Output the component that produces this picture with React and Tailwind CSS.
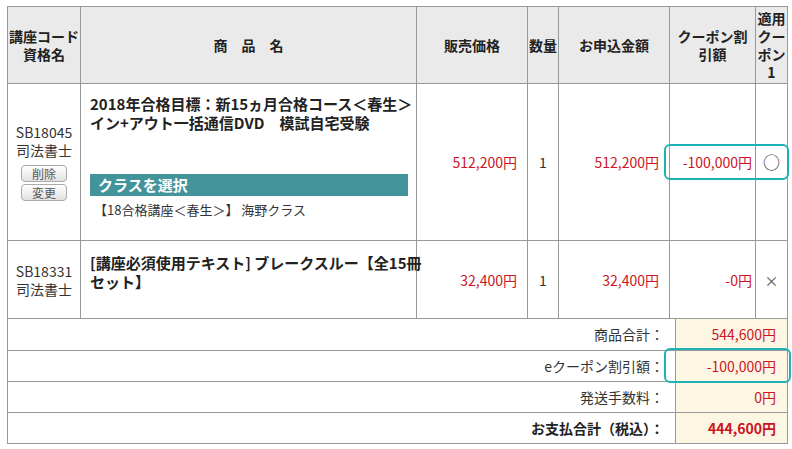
import React from "react";

const red = "text-[#cc1424]";

function Btn({ children }) {
  return (
    <div className="mx-auto w-[46px] h-[17px] rounded-[4px] border border-[#aaaaaa] bg-gradient-to-b from-white to-[#e2e2e2] text-[12px] leading-[15px] text-[#555]">
      {children}
    </div>
  );
}

export default function App() {
  const th = "border border-[#999] bg-[#eaeaea] font-bold text-[14px] leading-[18px] text-center align-middle text-[#222] p-0";
  const td = "border border-[#999] align-middle text-[14px] leading-[18px] p-0";
  return (
    <div className="relative w-[792px] h-[449px] bg-white text-[#333] font-['Noto_Sans_CJK_JP',sans-serif]">
      <div className="pt-[6px] pl-[7px]">
        <table className="table-fixed border-collapse w-[780px]">
          <colgroup>
            <col className="w-[73px]" />
            <col className="w-[336px]" />
            <col className="w-[111px]" />
            <col className="w-[31px]" />
            <col className="w-[111px]" />
            <col className="w-[86px]" />
            <col className="w-[32px]" />
          </colgroup>
          <thead>
            <tr className="h-[77px]">
              <th className={th}>講座コード<br />資格名</th>
              <th className={th}>商　品　名</th>
              <th className={th}>販売価格</th>
              <th className={th}>数量</th>
              <th className={th}>お申込金額</th>
              <th className={th}>クーポン割<br />引額</th>
              <th className={th}>適用<br />クー<br />ポン<br />1</th>
            </tr>
          </thead>
          <tbody>
            <tr className="h-[157px]">
              <td className={`${td} text-center`}>
                <div>SB18045</div>
                <div>司法書士</div>
                <div className="mt-[6px] flex flex-col gap-[2px]">
                  <Btn>削除</Btn>
                  <Btn>変更</Btn>
                </div>
              </td>
              <td className={`${td} !align-top pl-[9px] pr-[8px] pt-[10px]`}>
                <div className="text-[15px] font-bold leading-[19px] text-[#222] whitespace-nowrap">
                  2018年合格目標：新15ヵ月合格コース＜春生＞<br />
                  イン+アウト一括通信DVD　模試自宅受験
                </div>
                <div className="mt-[42px] h-[22px] bg-[#43939b] text-white font-bold text-[15px] leading-[22px] pl-[8px]">
                  クラスを選択
                </div>
                <div className="mt-[4px] text-[13px] leading-[20px] pl-[4px] text-[#333]">
                  【18合格講座＜春生＞】 海野クラス
                </div>
              </td>
              <td className={`${td} text-right pr-[10px] ${red}`}>512,200円</td>
              <td className={`${td} text-center`}>1</td>
              <td className={`${td} text-right pr-[10px] ${red}`}>512,200円</td>
              <td className={`${td} text-right pr-[3px] ${red}`}>-100,000円</td>
              <td className={`${td} text-center text-[17px]`}>○</td>
            </tr>
            <tr className="h-[78px]">
              <td className={`${td} text-center`}>
                <div>SB18331</div>
                <div>司法書士</div>
              </td>
              <td className={`${td} !align-top pl-[9px] pr-[8px] pt-[12px]`}>
                <div className="text-[15px] font-bold leading-[19px] text-[#222] whitespace-nowrap">
                  [講座必須使用テキスト] ブレークスルー【全15冊<br />
                  セット】
                </div>
              </td>
              <td className={`${td} text-right pr-[10px] ${red}`}>32,400円</td>
              <td className={`${td} text-center`}>1</td>
              <td className={`${td} text-right pr-[10px] ${red}`}>32,400円</td>
              <td className={`${td} text-right pr-[3px] ${red}`}>-0円</td>
              <td className={`${td} text-center text-[#555]`}>×</td>
            </tr>
          </tbody>
        </table>
        <table className="table-fixed border-collapse w-[780px]">
          <colgroup>
            <col className="w-[668px]" />
            <col className="w-[112px]" />
          </colgroup>
          <tbody>
            <tr className="h-[31px]">
              <td className={`${td} border-t-0 text-right pr-[11px]`}>商品合計：</td>
              <td className={`${td} border-t-0 text-right pr-[11px] bg-[#fcf6e3] ${red}`}>544,600円</td>
            </tr>
            <tr className="h-[31px]">
              <td className={`${td} text-right pr-[11px]`}>eクーポン割引額：</td>
              <td className={`${td} text-right pr-[11px] bg-[#fcf6e3] ${red}`}>-100,000円</td>
            </tr>
            <tr className="h-[31px]">
              <td className={`${td} text-right pr-[11px]`}>発送手数料：</td>
              <td className={`${td} text-right pr-[11px] bg-[#fcf6e3] ${red}`}>0円</td>
            </tr>
            <tr className="h-[31px]">
              <td className={`${td} text-right pr-[11px] font-bold text-[#222]`}>お支払合計（税込）：</td>
              <td className={`${td} text-right pr-[11px] bg-[#fcf6e3] font-bold ${red}`}>444,600円</td>
            </tr>
          </tbody>
        </table>
      </div>
      <div className="absolute left-[664px] top-[144px] w-[125px] h-[36px] border-2 border-[#1db2b5] rounded-[6px]" />
      <div className="absolute left-[664px] top-[348px] w-[127px] h-[35px] border-2 border-[#1db2b5] rounded-[6px]" />
    </div>
  );
}
